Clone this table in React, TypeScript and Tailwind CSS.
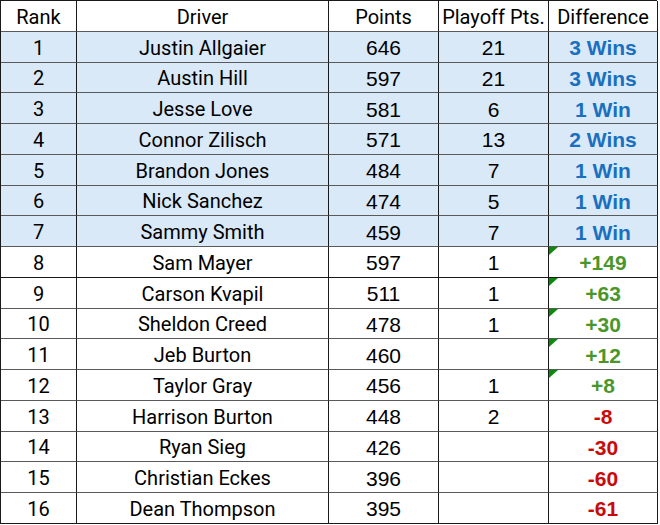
import React from "react";

type Row = {
  rank: number;
  driver: string;
  points: number;
  playoff?: number;
  diff: string;
  kind: "win" | "up" | "down";
  flag?: boolean;
};

const rows: Row[] = [
  { rank: 1, driver: "Justin Allgaier", points: 646, playoff: 21, diff: "3 Wins", kind: "win" },
  { rank: 2, driver: "Austin Hill", points: 597, playoff: 21, diff: "3 Wins", kind: "win" },
  { rank: 3, driver: "Jesse Love", points: 581, playoff: 6, diff: "1 Win", kind: "win" },
  { rank: 4, driver: "Connor Zilisch", points: 571, playoff: 13, diff: "2 Wins", kind: "win" },
  { rank: 5, driver: "Brandon Jones", points: 484, playoff: 7, diff: "1 Win", kind: "win" },
  { rank: 6, driver: "Nick Sanchez", points: 474, playoff: 5, diff: "1 Win", kind: "win" },
  { rank: 7, driver: "Sammy Smith", points: 459, playoff: 7, diff: "1 Win", kind: "win" },
  { rank: 8, driver: "Sam Mayer", points: 597, playoff: 1, diff: "+149", kind: "up", flag: true },
  { rank: 9, driver: "Carson Kvapil", points: 511, playoff: 1, diff: "+63", kind: "up", flag: true },
  { rank: 10, driver: "Sheldon Creed", points: 478, playoff: 1, diff: "+30", kind: "up", flag: true },
  { rank: 11, driver: "Jeb Burton", points: 460, diff: "+12", kind: "up", flag: true },
  { rank: 12, driver: "Taylor Gray", points: 456, playoff: 1, diff: "+8", kind: "up", flag: true },
  { rank: 13, driver: "Harrison Burton", points: 448, playoff: 2, diff: "-8", kind: "down" },
  { rank: 14, driver: "Ryan Sieg", points: 426, diff: "-30", kind: "down" },
  { rank: 15, driver: "Christian Eckes", points: 396, diff: "-60", kind: "down" },
  { rank: 16, driver: "Dean Thompson", points: 395, diff: "-61", kind: "down" },
];

const grid = "grid grid-cols-[76px_252px_110px_110px_109px] h-[30.75px]";
const cell = "flex items-center justify-center border-r border-b border-r-[#1a1a1a] pt-[2px] leading-none";
const label = "font-['Roboto',sans-serif] text-[20px] text-black";
const num = "font-['Liberation_Sans',Arial,sans-serif] text-[21px] text-black";

const diffColor = {
  win: "text-[#1a70c0]",
  up: "text-[#4a962b]",
  down: "text-[#c80a0a]",
};

export default function App() {
  return (
    <div className="w-[660px] h-[525px] bg-white">
      <div className="w-[657px] border-l border-t border-[#1a1a1a]">
        <div className={`${grid} bg-white`}>
          {["Rank", "Driver", "Points", "Playoff Pts.", "Difference"].map((h) => (
            <div key={h} className={`${cell} border-b-[#5a5a5a] ${label}`}>
              {h}
            </div>
          ))}
        </div>
        {rows.map((r) => {
          // the line under Sam Mayer is drawn darker in the sheet
          const line = r.rank === 8 ? "border-b-[#1a1a1a]" : r.rank === 16 ? "border-b-[#1a1a1a]" : "border-b-[#5a5a5a]";
          return (
            <div key={r.rank} className={`${grid} ${r.kind === "win" ? "bg-[#dae9f8]" : "bg-white"}`}>
              <div className={`${cell} ${line} ${label}`}>{r.rank}</div>
              <div className={`${cell} ${line} ${label}`}>{r.driver}</div>
              <div className={`${cell} ${line} ${num}`}>{r.points}</div>
              <div className={`${cell} ${line} ${num}`}>{r.playoff ?? ""}</div>
              <div className={`${cell} ${line} relative font-['Liberation_Sans',Arial,sans-serif] text-[21px] font-bold ${diffColor[r.kind]}`}>
                {r.flag && (
                  <svg className="absolute left-0 top-0" width="9" height="8" viewBox="0 0 9 8">
                    <polygon points="0,0 9,0 0,8" fill="#0b8a0b" />
                  </svg>
                )}
                {r.diff}
              </div>
            </div>
          );
        })}
      </div>
    </div>
  );
}
